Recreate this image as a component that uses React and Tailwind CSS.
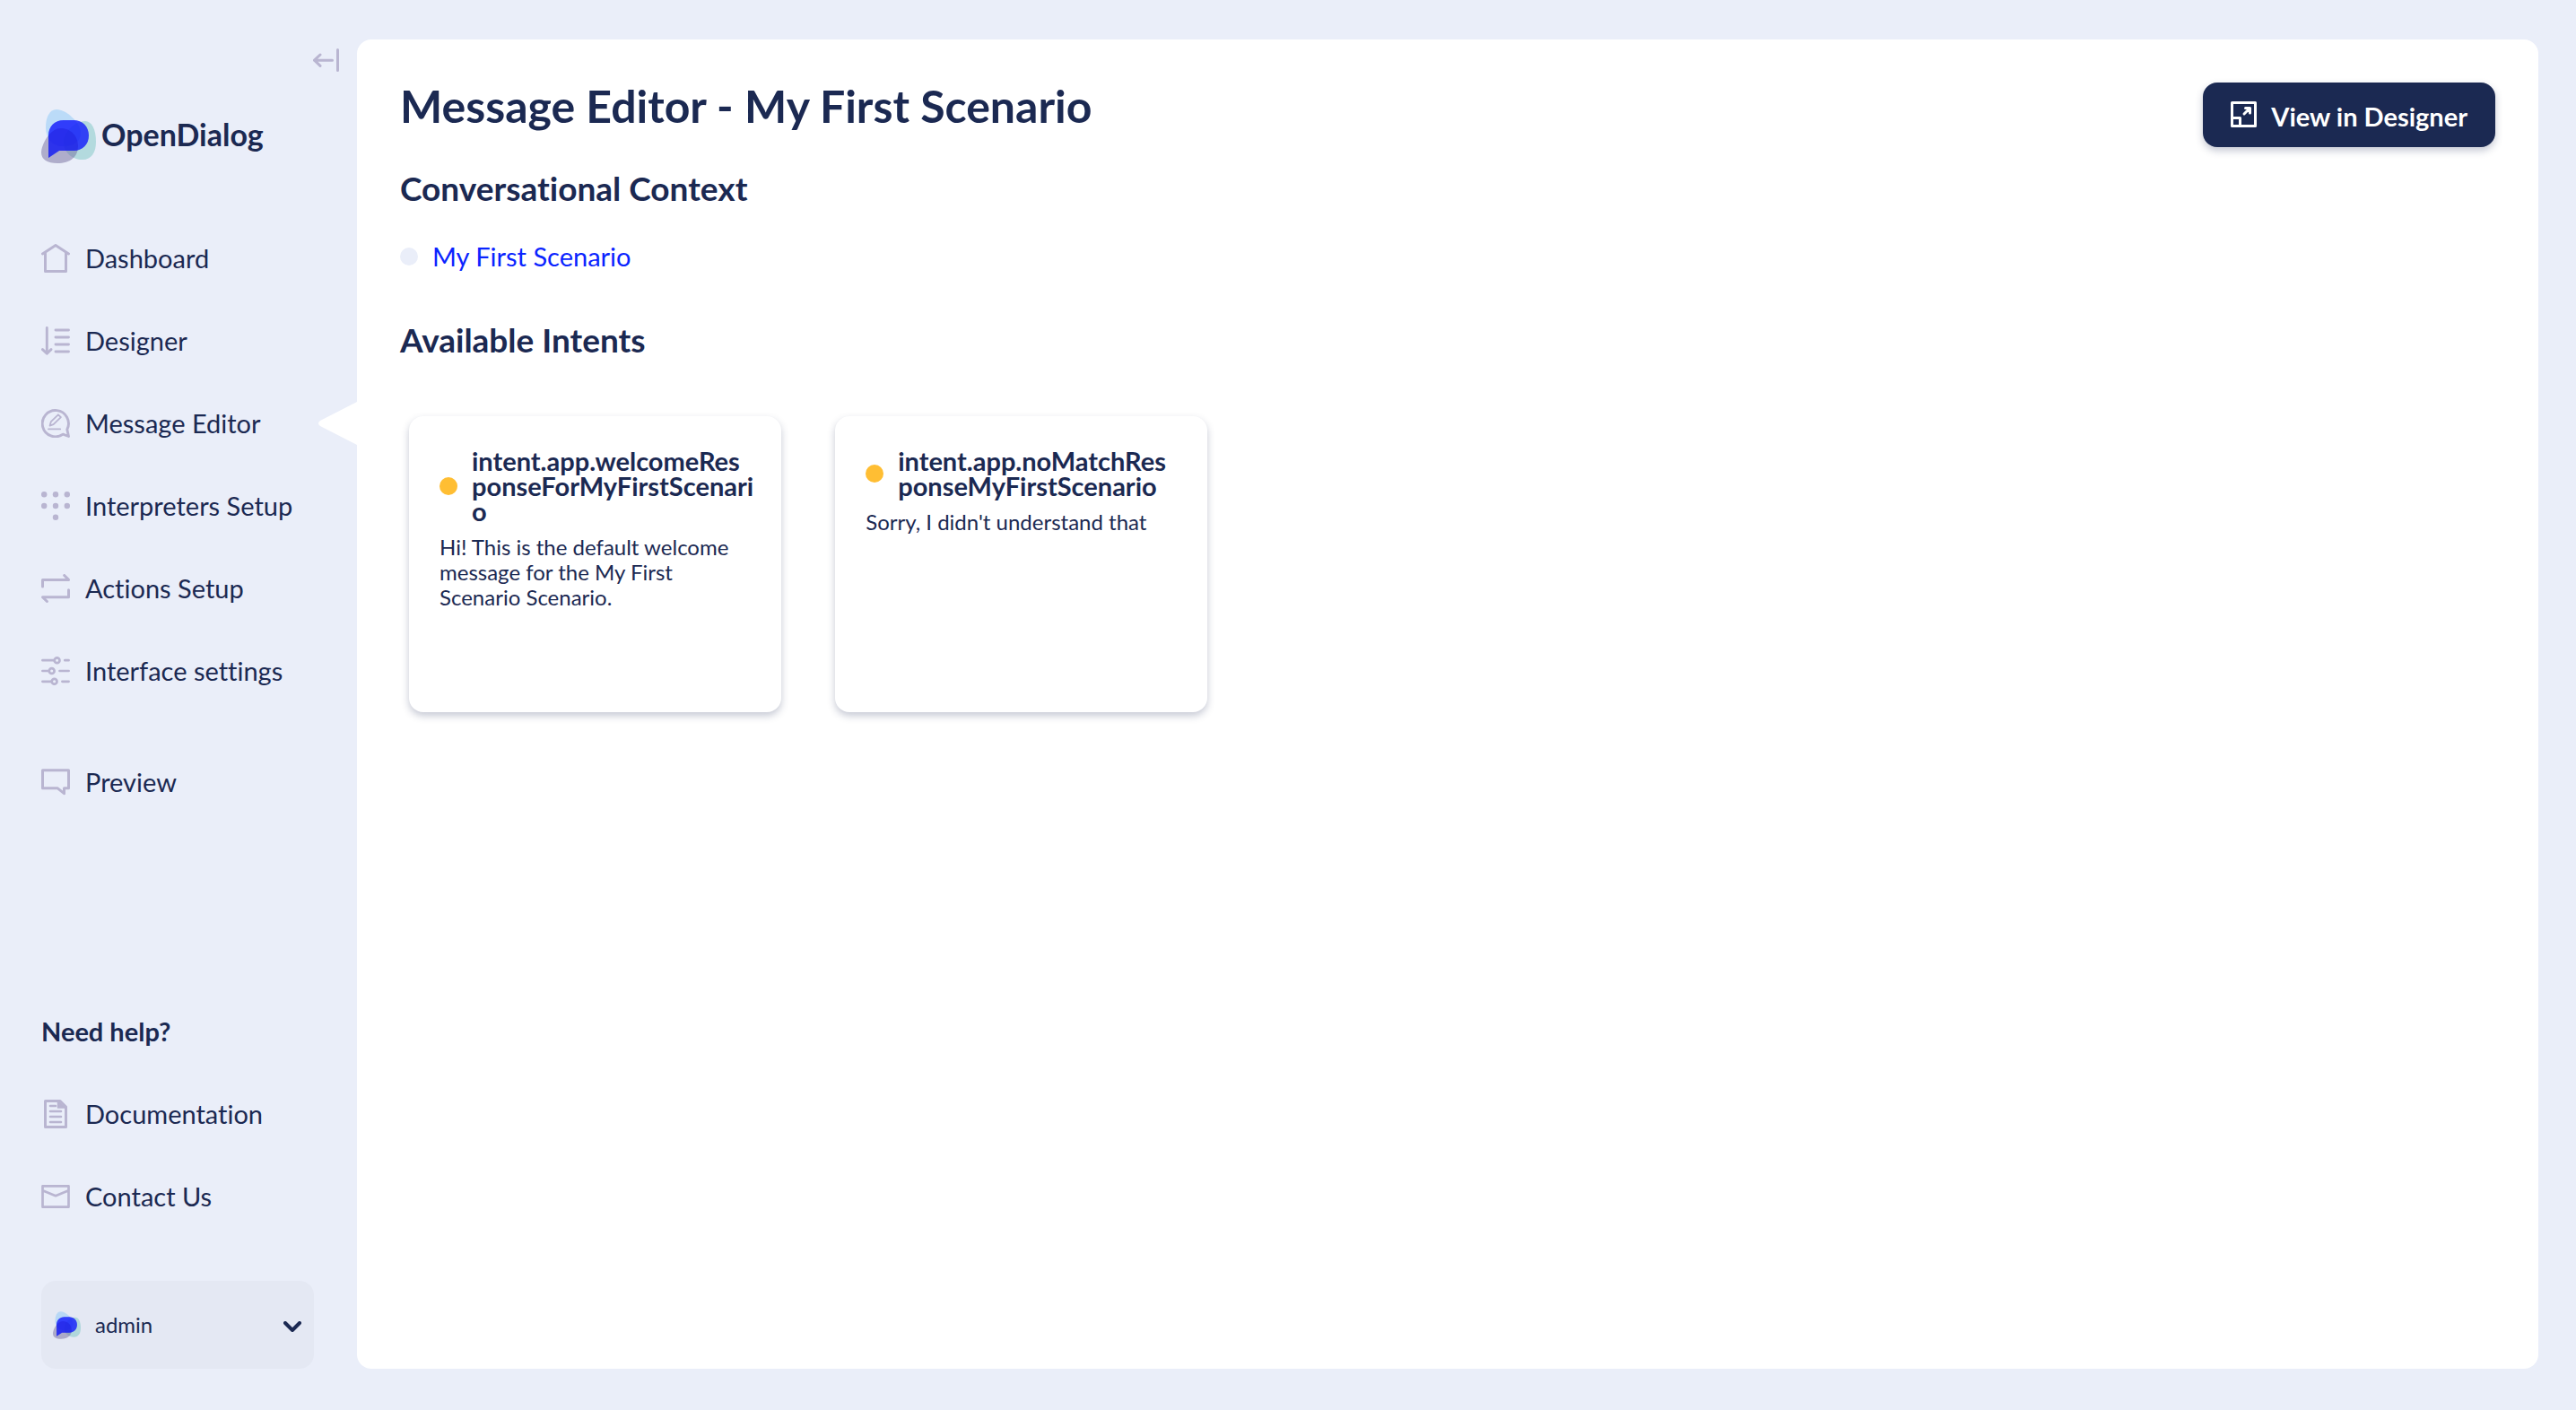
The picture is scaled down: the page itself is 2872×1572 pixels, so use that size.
const Icon = ({ children, className = "size-8" }) => (
  <svg viewBox="0 0 32 32" fill="none" stroke="currentColor" strokeWidth="3" strokeLinecap="round" strokeLinejoin="round" aria-hidden="true" className={`shrink-0 ${className}`}>
    {children}
  </svg>
);

const icons = {
  home: <path d="M1.5 11 16 1.6 30.5 11M4.5 10.5v20h23v-20" />,
  designer: <path d="M6.3 1.5V30M1.5 25.6 6.3 30.3 11 25.6M16 4h14.5M16 12h14.5M16 20h14.5M16 28h14.5" strokeWidth="2.9" />,
  message: (
    <>
      <path d="M24.2 28.1A14.6 14.6 0 1 1 28.8 22.8L30.5 30.5Z" strokeWidth="2.9" />
      <path d="M9.6 18.6 10.8 14.2 18.9 6.3 21.9 9.1 13.6 17.2Z" strokeWidth="1.8" />
      <path d="M8 22.4h13.2" strokeWidth="1.8" />
    </>
  ),
  dots: (
    <g fill="currentColor" stroke="none">
      {[[3.2, 3.2], [16, 3.2], [28.8, 3.2], [3.2, 16], [16, 16], [28.8, 16], [16, 28.8]].map(([x, y]) => (
        <circle key={`${x}-${y}`} cx={x} cy={y} r="3.2" />
      ))}
    </g>
  ),
  actions: <path d="M1.5 14V6.4h29l-4.8-4.9M30.5 17.8v7.9h-29l4.9 4.8" />,
  settings: (
    <g strokeWidth="2.7">
      <path d="M1.4 4.2H14M26.3 4.2h4.3M1.4 16H8M20.5 16h10.1M1.4 27.8H11M23.4 27.8h7.2" />
      <circle cx="17.6" cy="4.2" r="2.9" />
      <circle cx="11.7" cy="16" r="2.9" />
      <circle cx="14.6" cy="27.8" r="2.9" />
    </g>
  ),
  preview: <path d="M1.5 2.7h29v20h-5v6l-7.5-6H1.5Z" />,
  doc: (
    <>
      <path d="M4.5 1.5H21L27.5 8v22.5h-23Z" />
      <path d="M18.5 2v7h8Z" fill="currentColor" strokeWidth="1.5" />
      <path d="M10 7h6M10 13h12M10 19h12M10 25h12" strokeWidth="2.6" />
    </>
  ),
  mail: <path d="M1.5 4.3h29v23.4h-29ZM1.5 9.3 16 15.2 30.5 9.3" strokeWidth="2.7" />,
};

const sky = "M17 0C28 0 44 15 44 26C44 36 36 41 24 41C12 41 5 32 5 20C5 9 9 0 17 0Z";
const teal = "M49 13C56 13 61 22 61 36C61 48 56 56 46 56C34 56 25 48 25 36C25 25 38 13 49 13Z";
const plum = "M22 21C33 21 41 30 41 41C41 53 32 60 18 60C7 60 0 56 0 48C0 40 9 21 22 21Z";
const bubble = "M25 12H36C46 12 53 19 53 29C53 39 46 46 36 46H20L8 54V29C8 19 15 12 25 12Z";

const Logo = ({ id, className }) => (
  <svg viewBox="0 0 61 60" aria-hidden="true" className={`shrink-0 ${className}`}>
    <clipPath id={id}>
      <path d={bubble} />
    </clipPath>
    <path d={sky} fill="#8bc8f8" fillOpacity=".5" />
    <path d={teal} fill="#7bc6c4" fillOpacity=".5" />
    <path d={plum} fill="#736c9e" fillOpacity=".5" />
    <path d={bubble} fill="#3844fa" />
    <g clipPath={`url(#${id})`}>
      <path d={sky} fill="#1c26ff" fillOpacity=".25" />
      <path d={teal} fill="#1c38e8" fillOpacity=".25" />
      <path d={plum} fill="#1a14d0" fillOpacity=".35" />
    </g>
  </svg>
);

const mainNav = [
  { icon: "home", label: "Dashboard" },
  { icon: "designer", label: "Designer" },
  { icon: "message", label: "Message Editor", active: true },
  { icon: "dots", label: "Interpreters Setup" },
  { icon: "actions", label: "Actions Setup" },
  { icon: "settings", label: "Interface settings" },
];

const helpNav = [
  { icon: "doc", label: "Documentation" },
  { icon: "mail", label: "Contact Us" },
];

const intents = [
  { name: ["intent.app.welcomeRes", "ponseForMyFirstScenari", "o"], text: "Hi! This is the default welcome message for the My First Scenario Scenario." },
  { name: ["intent.app.noMatchRes", "ponseMyFirstScenario"], text: "Sorry, I didn't understand that" },
];

const NavItem = ({ icon, label, active }) => (
  <li className="relative">
    <a href="#" aria-current={active ? "page" : undefined} className="flex items-center gap-[17px] pl-[46px] text-[29px] leading-8">
      <Icon className="size-8 text-[#b9b5d1]">{icons[icon]}</Icon>
      <span>{label}</span>
    </a>
    {active && (
      <svg viewBox="0 0 44 48" aria-hidden="true" className="absolute -top-2 right-0 h-12 w-11 text-white">
        <path d="M44 0 3 21Q-1 24 3 27L44 48Z" fill="currentColor" />
      </svg>
    )}
  </li>
);

export default function App() {
  return (
    <div className="flex min-h-screen bg-[#eaeef9] font-['Lato',sans-serif] text-[#1b2952] [font-variant-ligatures:none]">
      <aside className="flex w-[398px] shrink-0 flex-col pb-[46px]">
        <div className="flex justify-end pt-[54px] pr-5">
          <button type="button" aria-label="Collapse sidebar" className="text-[#b9b5d1]">
            <svg viewBox="0 0 29 26" fill="none" stroke="currentColor" strokeWidth="3" strokeLinecap="round" strokeLinejoin="round" className="h-[26px] w-[29px]">
              <path d="M27.5 1.5v23M21.5 13.2H1.5M8 7 1.5 13.2 8 19.4" />
            </svg>
          </button>
        </div>
        <a href="#" className="mt-[42px] flex items-start gap-1.5 pl-[46px] text-[34px] leading-[56px] font-bold">
          <Logo id="brand-bubble" className="h-[60px] w-[61px]" />
          <span>OpenDialog</span>
        </a>
        <nav aria-label="Main" className="mt-[90px]">
          <ul className="flex flex-col gap-[60px]">
            {mainNav.map((item) => <NavItem key={item.label} {...item} />)}
          </ul>
          <ul className="mt-[92px]">
            <NavItem icon="preview" label="Preview" />
          </ul>
        </nav>
        <nav aria-label="Help" className="mt-auto">
          <h2 className="pl-[46px] text-[29px] leading-8 font-bold">Need help?</h2>
          <ul className="mt-[60px] flex flex-col gap-[60px]">
            {helpNav.map((item) => <NavItem key={item.label} {...item} />)}
          </ul>
        </nav>
        <button type="button" className="mt-[78px] mr-12 ml-[46px] flex h-[98px] items-center rounded-2xl bg-[#e4e8f3] pr-3.5 pl-[13px] text-[24px]">
          <Logo id="user-bubble" className="size-[31px]" />
          <span className="ml-4">admin</span>
          <svg viewBox="0 0 20 12" fill="none" stroke="currentColor" strokeWidth="4" strokeLinecap="round" strokeLinejoin="round" aria-hidden="true" className="mt-1 ml-auto h-3 w-5">
            <path d="m2 2 8 8 8-8" />
          </svg>
        </button>
      </aside>

      <main className="mt-11 mr-[42px] mb-[46px] flex-1 rounded-2xl bg-white p-12">
        <header className="flex h-[72px] items-start justify-between">
          <h1 className="text-[50px] leading-[52px] font-bold">Message Editor - My First Scenario</h1>
          <button type="button" className="flex h-[72px] items-center gap-4 rounded-2xl bg-[#1b2952] px-[31px] pt-1 text-[29px] font-bold text-white shadow-[0_4px_8px_rgba(27,41,82,0.25)]">
            <svg viewBox="0 0 29 29" fill="none" stroke="currentColor" strokeWidth="3" strokeLinecap="round" strokeLinejoin="round" aria-hidden="true" className="mb-1.5 size-[29px]">
              <path d="M1.5 1.5h26v26h-26ZM1.5 18.5h9v9M15 14l6.5-6.5M16.5 7.5h5V13" />
            </svg>
            View in Designer
          </button>
        </header>
        <section className="mt-[26px]">
          <h2 className="text-[37px] leading-10 font-bold">Conversational Context</h2>
          <div className="mt-9 flex items-center gap-4">
            <span className="size-5 rounded-full bg-[#eaeef9]" />
            <a href="#" className="text-[29px] leading-10 text-[#0a24ff]">My First Scenario</a>
          </div>
        </section>
        <section className="mt-[53px]">
          <h2 className="text-[37px] leading-10 font-bold">Available Intents</h2>
          <div className="mt-[65px] grid grid-cols-5 gap-[60px] px-2.5">
            {intents.map((intent) => (
              <article key={intent.text} className="h-[330px] rounded-2xl bg-white px-[34px] py-9 shadow-[0_4px_8px_rgba(27,41,82,0.25)]">
                <div className="flex items-center gap-4">
                  <span className="size-5 shrink-0 rounded-full bg-[#ffbe33]" />
                  <h3 className="text-[29px] leading-7 font-bold">
                    {intent.name.map((line) => <span key={line} className="block">{line}</span>)}
                  </h3>
                </div>
                <p className="mt-3 text-[24px] leading-7">{intent.text}</p>
              </article>
            ))}
          </div>
        </section>
      </main>
    </div>
  );
}
